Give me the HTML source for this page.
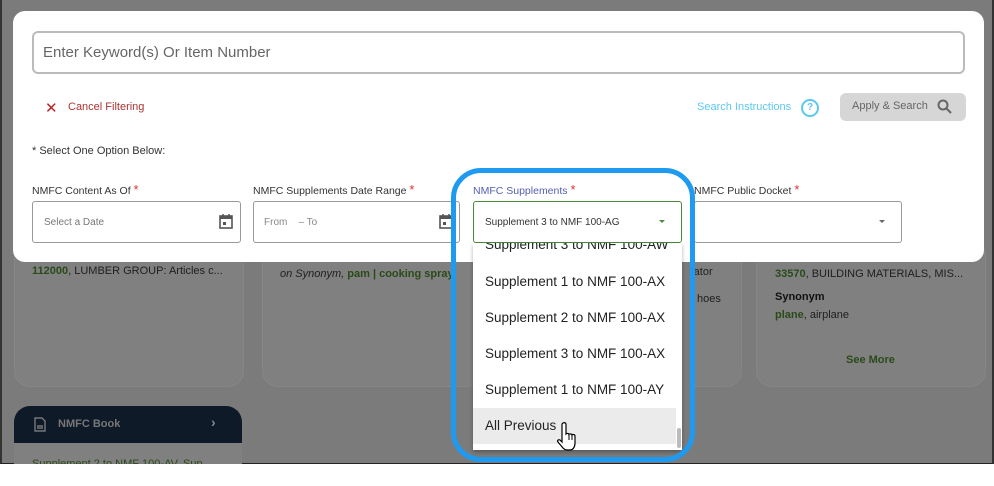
<!DOCTYPE html>
<html><head><style>
body{margin:0;width:994px;height:486px;background:#fff;position:relative;overflow:hidden;font-family:"Liberation Sans",sans-serif}
.bg{position:absolute;left:0;top:0;width:994px;height:464px;background:#7b7b7b;border-left:2px solid #333;border-right:2px solid #333;border-bottom:1px solid #222;box-sizing:border-box}
.card{position:absolute;background:#808080;border-radius:16px;border:1px solid #868686}
.a{position:absolute;white-space:nowrap}
.modal{position:absolute;left:13px;top:11px;width:971px;height:251px;background:#fff;border-radius:12px}
.lbl{position:absolute;font-size:10.5px;color:#333;top:182px}
.lbl b{color:#d33;font-weight:normal;font-size:13px}
.inp{position:absolute;top:201px;height:42px;border:1px solid #999;border-radius:3px;box-sizing:border-box;background:#fff}
.it{position:absolute;left:485px;font-size:13.5px;color:#222}
</style></head><body>
<div class="bg"></div>
<div class="card" style="left:14px;top:240px;width:228px;height:145px"></div>
<div class="a" style="left:32px;top:265px;font-size:11px;color:#1e1e1e"><span style="color:#2a4a1a;font-weight:bold">112000</span>, LUMBER GROUP: Articles c...</div>
<div class="card" style="left:262px;top:240px;width:218px;height:145px"></div>
<div class="a" style="left:280px;top:268px;font-size:11px;color:#1e1e1e;font-style:italic">on Synonym, <b style="color:#2a4a1a;font-style:normal">pam | cooking spray</b></div>
<div class="card" style="left:690px;top:240px;width:50px;height:145px;border-radius:0 16px 16px 0"></div>
<div class="a" style="left:690px;top:266px;font-size:11px;color:#1e1e1e">rator</div>
<div class="a" style="left:697px;top:293px;font-size:11px;color:#1e1e1e">hoes</div>
<div class="card" style="left:756px;top:240px;width:228px;height:145px"></div>
<div class="a" style="left:775px;top:268px;font-size:11px;color:#1e1e1e"><b style="color:#2a4a1a">33570</b>, BUILDING MATERIALS, MIS...</div>
<div class="a" style="left:775px;top:291px;font-size:11px;color:#111;font-weight:bold">Synonym</div>
<div class="a" style="left:775px;top:309px;font-size:11px;color:#1e1e1e"><b style="color:#2a4a1a">plane</b>, airplane</div>
<div class="a" style="left:846px;top:354px;font-size:11px;color:#2a4a1a;font-weight:bold">See More</div>
<div style="position:absolute;left:14px;top:406px;width:228px;height:58px;background:#808080;border-radius:16px 16px 0 0;overflow:hidden">
<div style="height:37px;background:#0e1a28"></div></div>
<svg class="a" style="left:34px;top:417px" width="12" height="15"><path d="M1 1h7l3 3v10H1z M3 9h6M3 11h6" fill="none" stroke="#888" stroke-width="1.2"/></svg>
<div class="a" style="left:58px;top:418px;font-size:11px;color:#777;font-weight:bold">NMFC Book</div>
<div class="a" style="left:211px;top:414px;font-size:14px;color:#888;font-weight:bold">›</div>
<div class="a" style="left:32px;top:458px;font-size:11px;color:#2a4a1a;height:6px;overflow:hidden">Supplement 2 to NMF 100-AV, Sup</div>

<div class="modal"></div>
<div style="position:absolute;left:32px;top:31px;width:933px;height:43px;border:2px solid #bbb;border-radius:6px;box-sizing:border-box"></div>
<div class="a" style="left:43px;top:44px;font-size:15px;color:#666">Enter Keyword(s) Or Item Number</div>
<div class="a" style="left:45px;top:99px;font-size:15px;color:#b22;">✕</div>
<div class="a" style="left:68px;top:101px;font-size:11px;color:#a33">Cancel Filtering</div>
<div class="a" style="left:697px;top:101px;font-size:11px;color:#5ac8f0">Search Instructions</div>
<div class="a" style="left:801px;top:99px;width:14px;height:14px;border:2px solid #5ac8f0;border-radius:50%;font-size:10px;color:#5ac8f0;text-align:center;line-height:14px;font-weight:bold">?</div>
<div style="position:absolute;left:840px;top:93px;width:126px;height:28px;background:#d6d6d6;border-radius:6px"></div>
<div class="a" style="left:852px;top:100px;font-size:11px;color:#666">Apply &amp; Search</div>
<svg class="a" style="left:937px;top:99px" width="15" height="15"><circle cx="6" cy="6" r="4.5" fill="none" stroke="#666" stroke-width="2"/><path d="M9.5 9.5L14 14" stroke="#666" stroke-width="2"/></svg>
<div class="a" style="left:32px;top:145px;font-size:11px;color:#333">* Select One Option Below:</div>
<div class="lbl" style="left:32px">NMFC Content As Of <b>*</b></div>
<div class="lbl" style="left:253px">NMFC Supplements Date Range <b>*</b></div>
<div class="lbl" style="left:473px;color:#5560b0">NMFC Supplements <b>*</b></div>
<div class="lbl" style="left:694px">NMFC Public Docket <b>*</b></div>
<div class="inp" style="left:32px;width:209px"></div>
<div class="a" style="left:44px;top:217px;font-size:10px;color:#777">Select a Date</div>
<svg class="a" style="left:219px;top:213px" width="14" height="16"><rect x="1" y="3" width="12" height="12" fill="none" stroke="#555" stroke-width="1.6"/><rect x="1" y="3" width="12" height="3" fill="#555"/><rect x="4" y="9" width="3" height="3" fill="#555"/><path d="M4 1v3M10 1v3" stroke="#555" stroke-width="1.5"/></svg>
<div class="inp" style="left:253px;width:207px"></div>
<div class="a" style="left:264px;top:217px;font-size:10px;color:#888">From &nbsp;&nbsp;&nbsp;– To</div>
<svg class="a" style="left:439px;top:213px" width="14" height="16"><rect x="1" y="3" width="12" height="12" fill="none" stroke="#555" stroke-width="1.6"/><rect x="1" y="3" width="12" height="3" fill="#555"/><rect x="4" y="9" width="3" height="3" fill="#555"/><path d="M4 1v3M10 1v3" stroke="#555" stroke-width="1.5"/></svg>
<div class="inp" style="left:473px;width:209px;border-color:#4a8a3a"></div>
<div class="a" style="left:485px;top:217px;font-size:10px;color:#333">Supplement 3 to NMF 100-AG</div>
<div class="a" style="left:659px;top:220px;border:3px solid transparent;border-top:3px solid #4a8a3a"></div>
<div class="inp" style="left:694px;width:208px"></div>
<div class="a" style="left:879px;top:220px;border:3px solid transparent;border-top:3px solid #666"></div>

<div style="position:absolute;left:473px;top:243px;width:209px;height:207px;background:#fff;overflow:hidden;box-shadow:0 2px 4px rgba(0,0,0,.3)">
<div style="position:absolute;left:0;top:165px;width:203px;height:36px;background:#ebebeb"></div>
<div style="position:absolute;left:204px;top:185px;width:4px;height:20px;background:#bbb;border-radius:2px"></div>
</div>
<div class="it" style="top:237px;clip-path:inset(6px 0 0 0)">Supplement 3 to NMF 100-AW</div>
<div class="it" style="top:274px">Supplement 1 to NMF 100-AX</div>
<div class="it" style="top:310px">Supplement 2 to NMF 100-AX</div>
<div class="it" style="top:346px">Supplement 3 to NMF 100-AX</div>
<div class="it" style="top:382px">Supplement 1 to NMF 100-AY</div>
<div class="it" style="top:418px">All Previous</div>
<svg class="a" style="left:557px;top:421px" width="24" height="32"><path d="M6 2c1.5-1 3 0 3 1.5V13c1-1 3-.5 3 .5 1-1 3-.5 3 .5 1-1 3-.5 3 1v7c0 4-2 7-5 7h-3c-2 0-3-1-4-2l-5-6c-1-1 0-3 2-2l2 2V3.5C5 2.8 5.5 2.3 6 2z" fill="#fff" stroke="#000" stroke-width="1.2"/><path d="M12 14v5M15 14v5M18 16v4" stroke="#000" stroke-width="1"/></svg>
<div style="position:absolute;left:451px;top:168px;width:244px;height:294px;border:5px solid #1e9af0;border-radius:30px;box-sizing:border-box"></div>
</body></html>
